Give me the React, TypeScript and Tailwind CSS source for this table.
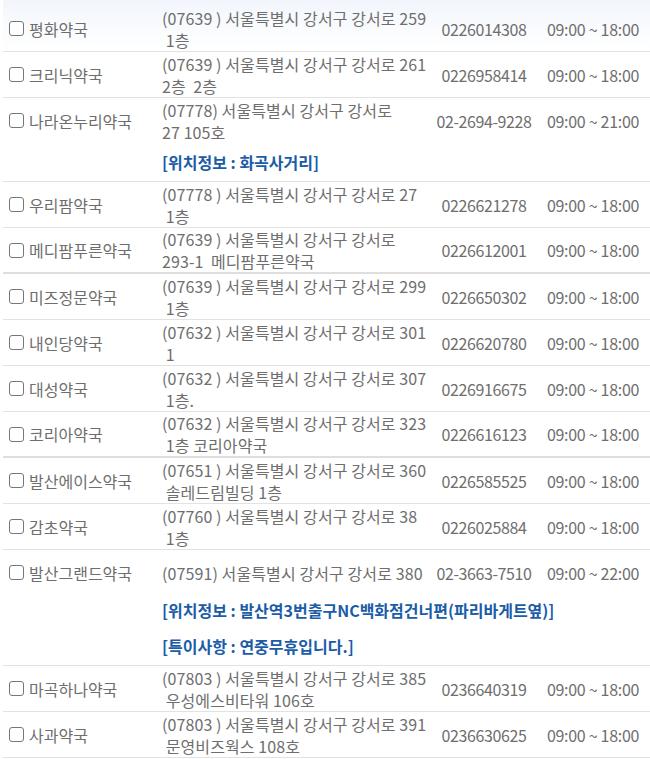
type Pharmacy = {
  name: string;
  addr: string[];
  tel: string;
  hours: string;
  info?: string[];
  infoClass?: string;
  thick?: boolean;
};

const list: Pharmacy[] = [
  { name: "평화약국", addr: ["(07639 ) 서울특별시 강서구 강서로 259", " 1층"], tel: "0226014308", hours: "09:00 ~ 18:00" },
  { name: "크리닉약국", addr: ["(07639 ) 서울특별시 강서구 강서로 261", "2층  2층"], tel: "0226958414", hours: "09:00 ~ 18:00" },
  {
    name: "나라온누리약국",
    addr: ["(07778) 서울특별시 강서구 강서로", "27 105호"],
    tel: "02-2694-9228",
    hours: "09:00 ~ 21:00",
    info: ["[위치정보 : 화곡사거리]"],
    infoClass: "pt-[8px] pb-[8px]",
  },
  { name: "우리팜약국", addr: ["(07778 ) 서울특별시 강서구 강서로 27", " 1층"], tel: "0226621278", hours: "09:00 ~ 18:00" },
  { name: "메디팜푸른약국", addr: ["(07639 ) 서울특별시 강서구 강서로", "293-1  메디팜푸른약국"], tel: "0226612001", hours: "09:00 ~ 18:00", thick: true },
  { name: "미즈정문약국", addr: ["(07639 ) 서울특별시 강서구 강서로 299", " 1층"], tel: "0226650302", hours: "09:00 ~ 18:00" },
  { name: "내인당약국", addr: ["(07632 ) 서울특별시 강서구 강서로 301", " 1"], tel: "0226620780", hours: "09:00 ~ 18:00" },
  { name: "대성약국", addr: ["(07632 ) 서울특별시 강서구 강서로 307", " 1층."], tel: "0226916675", hours: "09:00 ~ 18:00" },
  { name: "코리아약국", addr: ["(07632 ) 서울특별시 강서구 강서로 323", " 1층 코리아약국"], tel: "0226616123", hours: "09:00 ~ 18:00", thick: true },
  { name: "발산에이스약국", addr: ["(07651 ) 서울특별시 강서구 강서로 360", " 솔레드림빌딩 1층"], tel: "0226585525", hours: "09:00 ~ 18:00" },
  { name: "감초약국", addr: ["(07760 ) 서울특별시 강서구 강서로 38", " 1층"], tel: "0226025884", hours: "09:00 ~ 18:00" },
  {
    name: "발산그랜드약국",
    addr: ["(07591) 서울특별시 강서구 강서로 380"],
    tel: "02-3663-7510",
    hours: "09:00 ~ 22:00",
    info: ["[위치정보 : 발산역3번출구NC백화점건너편(파리바게트옆)]", "[특이사항 : 연중무휴입니다.]"],
    infoClass: "pt-[4px] pb-[8px] gap-[14px]",
  },
  { name: "마곡하나약국", addr: ["(07803 ) 서울특별시 강서구 강서로 385", " 우성에스비타워 106호"], tel: "0236640319", hours: "09:00 ~ 18:00" },
  { name: "사과약국", addr: ["(07803 ) 서울특별시 강서구 강서로 391", " 문영비즈웍스 108호"], tel: "0236630625", hours: "09:00 ~ 18:00" },
];

const Row = ({ p }: { p: Pharmacy }) => {
  return (
    <div className={p.thick ? "border-b-2 border-[#dedede]" : "border-b border-[#e2e2e2]"}>
      <div className={`grid grid-cols-[159px_270px_104px_1fr] ${p.thick ? "h-[44px]" : "h-[45px]"}`}>
        {/* name + checkbox */}
        <label className="flex items-center gap-[5px] pl-[6px]">
          <input type="checkbox" className="appearance-none w-[15px] h-[15px] border-[1.5px] border-[#777] rounded-[3px] bg-white" />
          <span>{p.name}</span>
        </label>
        {/* address */}
        <div className="flex flex-col justify-center whitespace-pre tracking-[0.1px]">
          {p.addr.map((line, i) => (
            <div key={i}>{line}</div>
          ))}
        </div>
        <div className="flex items-center justify-center tracking-[-0.4px]">{p.tel}</div>
        <div className="flex items-center justify-center tracking-[-0.3px]">{p.hours}</div>
      </div>
      {p.info && (
        <div className={`flex flex-col pl-[159px] font-bold text-[#1a5ca8] ${p.infoClass}`}>
          {p.info.map((t, i) => (
            <div key={i}>{t}</div>
          ))}
        </div>
      )}
    </div>
  );
};

const App = () => {
  return (
    <div
      className="w-[650px] h-[759px] overflow-hidden bg-white text-[#6e6e6e] text-[16px] leading-[22px]"
      style={{ fontFamily: '"Noto Sans CJK KR", sans-serif' }}
    >
      <div className="ml-[3px] pt-[6px] bg-gradient-to-b from-[#f2f6fc] to-white to-[50px]">
        {list.map((p) => (
          <Row key={p.name} p={p} />
        ))}
      </div>
    </div>
  );
};

export default App;
